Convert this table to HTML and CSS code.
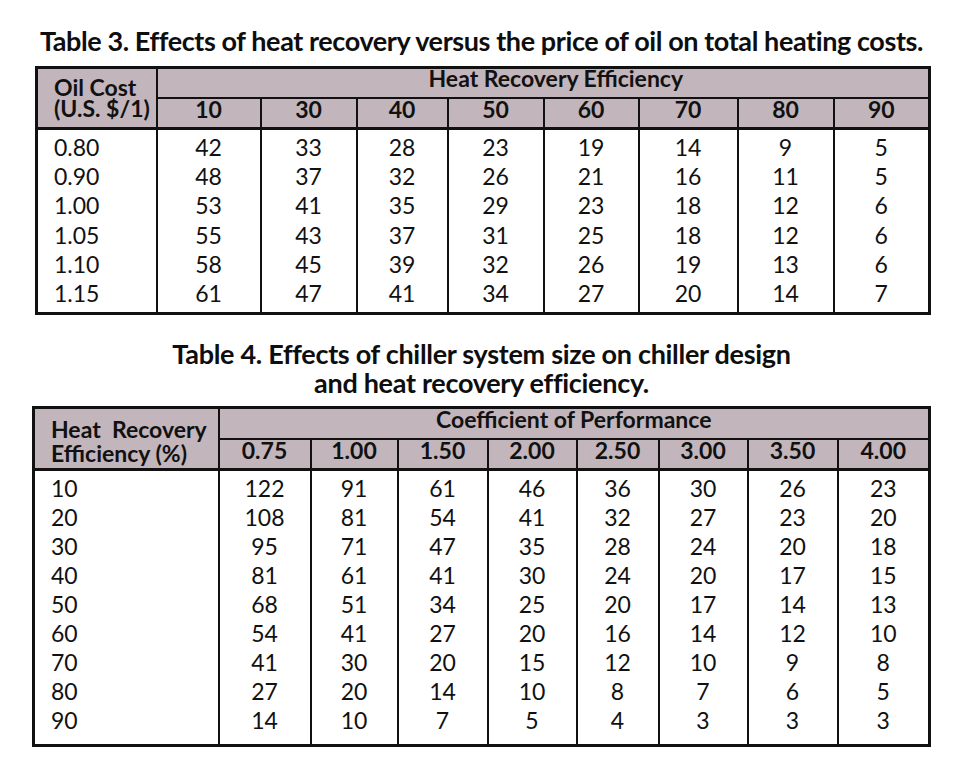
FILE: index.html
```html
<!DOCTYPE html>
<html>
<head>
<meta charset="utf-8">
<link rel="stylesheet" href="styles.css">
</head>
<body>
<div class="page">
  <h1 class="title title3">Table 3. Effects of heat recovery versus the price of oil on total heating costs.</h1>
  <table class="tbl tbl3">
    <colgroup>
      <col class="c3-0"><col class="c3-1"><col class="c3-2"><col class="c3-3"><col class="c3-4"><col class="c3-5"><col class="c3-6"><col class="c3-7"><col class="c3-8">
    </colgroup>
    <thead>
      <tr class="hr1">
        <th rowspan="2" class="lefthead">Oil Cost<br>(U.S. $/1)</th>
        <th colspan="8" class="grouphead">Heat Recovery Efficiency</th>
      </tr>
      <tr class="hr2">
        <th>10</th><th>30</th><th>40</th><th>50</th><th>60</th><th>70</th><th>80</th><th>90</th>
      </tr>
    </thead>
    <tbody>
      <tr class="first"><td>0.80</td><td>42</td><td>33</td><td>28</td><td>23</td><td>19</td><td>14</td><td>9</td><td>5</td></tr>
      <tr><td>0.90</td><td>48</td><td>37</td><td>32</td><td>26</td><td>21</td><td>16</td><td>11</td><td>5</td></tr>
      <tr><td>1.00</td><td>53</td><td>41</td><td>35</td><td>29</td><td>23</td><td>18</td><td>12</td><td>6</td></tr>
      <tr><td>1.05</td><td>55</td><td>43</td><td>37</td><td>31</td><td>25</td><td>18</td><td>12</td><td>6</td></tr>
      <tr><td>1.10</td><td>58</td><td>45</td><td>39</td><td>32</td><td>26</td><td>19</td><td>13</td><td>6</td></tr>
      <tr class="last"><td>1.15</td><td>61</td><td>47</td><td>41</td><td>34</td><td>27</td><td>20</td><td>14</td><td>7</td></tr>
    </tbody>
  </table>

  <h1 class="title title4">Table 4. Effects of chiller system size on chiller design<br>and heat recovery efficiency.</h1>
  <table class="tbl tbl4">
    <colgroup>
      <col class="c4-0"><col class="c4-1"><col class="c4-2"><col class="c4-3"><col class="c4-4"><col class="c4-5"><col class="c4-6"><col class="c4-7"><col class="c4-8">
    </colgroup>
    <thead>
      <tr class="hr1">
        <th rowspan="2" class="lefthead">Heat&nbsp; Recovery<br>Efficiency (%)</th>
        <th colspan="8" class="grouphead">Coefficient of Performance</th>
      </tr>
      <tr class="hr2">
        <th>0.75</th><th>1.00</th><th>1.50</th><th>2.00</th><th>2.50</th><th>3.00</th><th>3.50</th><th>4.00</th>
      </tr>
    </thead>
    <tbody>
      <tr class="first"><td>10</td><td>122</td><td>91</td><td>61</td><td>46</td><td>36</td><td>30</td><td>26</td><td>23</td></tr>
      <tr><td>20</td><td>108</td><td>81</td><td>54</td><td>41</td><td>32</td><td>27</td><td>23</td><td>20</td></tr>
      <tr><td>30</td><td>95</td><td>71</td><td>47</td><td>35</td><td>28</td><td>24</td><td>20</td><td>18</td></tr>
      <tr><td>40</td><td>81</td><td>61</td><td>41</td><td>30</td><td>24</td><td>20</td><td>17</td><td>15</td></tr>
      <tr><td>50</td><td>68</td><td>51</td><td>34</td><td>25</td><td>20</td><td>17</td><td>14</td><td>13</td></tr>
      <tr><td>60</td><td>54</td><td>41</td><td>27</td><td>20</td><td>16</td><td>14</td><td>12</td><td>10</td></tr>
      <tr><td>70</td><td>41</td><td>30</td><td>20</td><td>15</td><td>12</td><td>10</td><td>9</td><td>8</td></tr>
      <tr><td>80</td><td>27</td><td>20</td><td>14</td><td>10</td><td>8</td><td>7</td><td>6</td><td>5</td></tr>
      <tr class="last"><td>90</td><td>14</td><td>10</td><td>7</td><td>5</td><td>4</td><td>3</td><td>3</td><td>3</td></tr>
    </tbody>
  </table>
</div>
</body>
</html>
```

FILE: styles.css
```css
html, body {
  margin: 0;
  padding: 0;
  background: #ffffff;
}
body {
  width: 960px;
  height: 776px;
  overflow: hidden;
  font-family: "Lato", "Open Sans", sans-serif;
  color: #111111;
}
.page {
  display: flex;
  flex-direction: column;
  padding-left: 34px;
  width: 895px;
}
.title {
  margin: 0;
  font-weight: 700;
  font-size: 27px;
  text-align: center;
  color: #0e0e0e;
}
.title3 {
  line-height: 30px;
  padding-top: 26px;
  padding-bottom: 10px;
  white-space: nowrap;
  letter-spacing: -0.4px;
}
.title4 {
  line-height: 29px;
  padding-top: 24px;
  padding-bottom: 9px;
  letter-spacing: -0.3px;
}
.tbl {
  border-collapse: collapse;
  table-layout: fixed;
  border: 3px solid #111;
  font-size: 23px;
}
.tbl3 { width: 893px; margin-left: 1px; }
.tbl4 { width: 895px; margin-left: -2px; }

.c3-0 { width: 120px; } .c3-1 { width: 104px; } .c3-2 { width: 96px; } .c3-3 { width: 91px; }
.c3-4 { width: 96px; } .c3-5 { width: 95px; } .c3-6 { width: 99px; } .c3-7 { width: 96px; } .c3-8 { width: 96px; }
.c4-0 { width: 185px; } .c4-1 { width: 92px; } .c4-2 { width: 87px; } .c4-3 { width: 90px; }
.c4-4 { width: 89px; } .c4-5 { width: 82px; } .c4-6 { width: 89px; } .c4-7 { width: 90px; } .c4-8 { width: 92px; }

.tbl th {
  background: #c2b5bb;
  font-weight: 700;
  border: 2px solid #111;
  padding: 0;
  text-align: center;
  vertical-align: top;
}
.tbl .hr1 th { height: 28px; line-height: 18px; }
.tbl .hr2 th { height: 28px; line-height: 20px; border-bottom: 3px solid #111; }
.tbl4 .hr1 th { height: 29px; line-height: 21px; }
.tbl4 .hr2 th { line-height: 21px; }
.tbl3 th.grouphead { padding-left: 26px; }
.tbl th.lefthead {
  text-align: left;
  vertical-align: middle;
  padding-left: 16px;
  line-height: 21px;
  border-bottom: 3px solid #111;
}
.tbl4 th.lefthead { line-height: 24px; padding-top: 4px; }
.tbl td {
  border-left: 2px solid #111;
  border-right: 2px solid #111;
  padding: 0;
  height: 29.2px;
  line-height: 29px;
  text-align: center;
  font-weight: 400;
}
.tbl4 td { height: 29px; }
.tbl td:first-child {
  text-align: left;
  padding-left: 16px;
}
.tbl3 tr.first td { padding-top: 3px; }
.tbl3 tr.last td { padding-bottom: 4px; }
.tbl4 tr.first td { padding-top: 3px; }
.tbl4 tr.last td { padding-bottom: 9px; }
```
